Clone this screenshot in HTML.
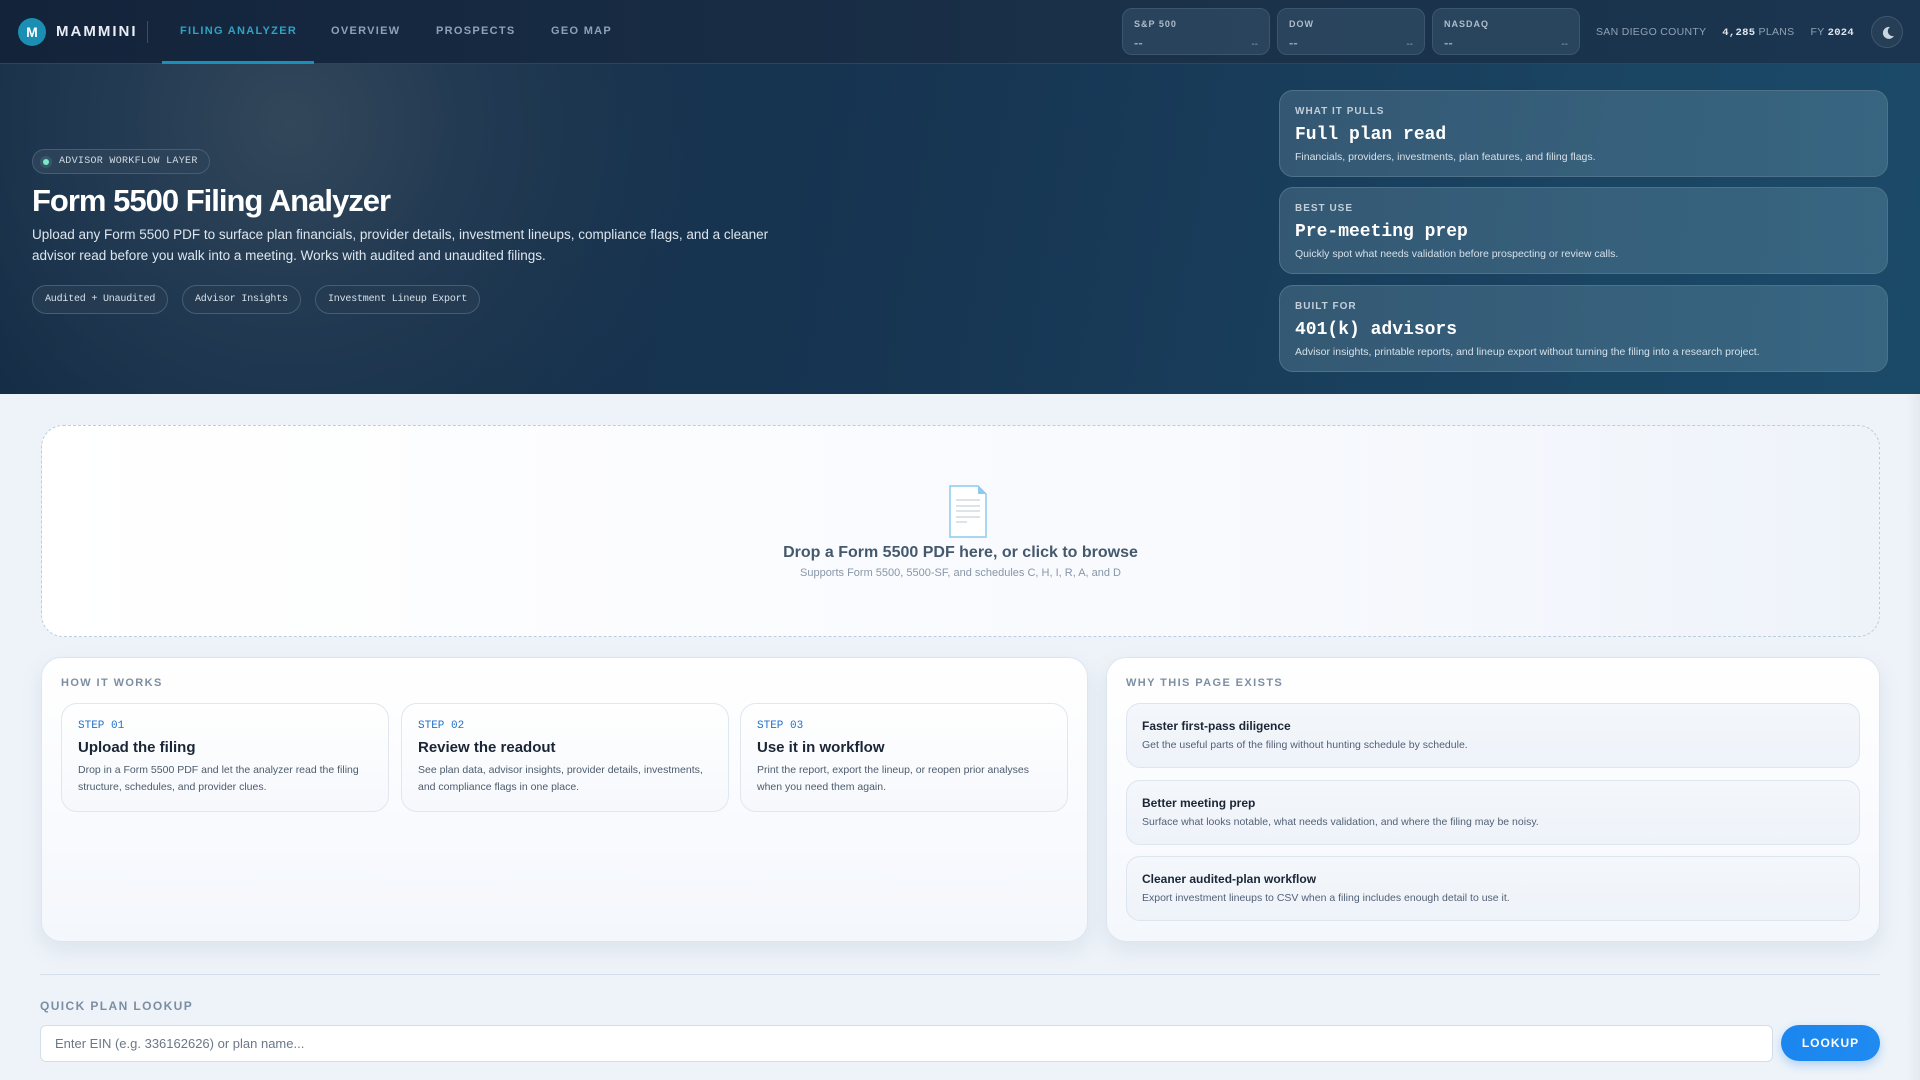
<!DOCTYPE html>
<html><head><meta charset="utf-8"><style>
*{box-sizing:border-box;margin:0;padding:0}
body{width:1920px;height:1080px;overflow:hidden;font-family:"Liberation Sans",sans-serif;background:#eef3f9;position:relative}
.mono{font-family:"Liberation Mono",monospace}
.hdr{position:absolute;left:0;top:0;width:1920px;height:64px;background:linear-gradient(90deg,#13233a,#1a3149 60%,#1b3550);border-bottom:1px solid #2a4560}
.logo{position:absolute;left:18px;top:18px;width:28px;height:28px;border-radius:50%;background:#1b8fb3;color:#fff;font-weight:bold;font-size:14px;text-align:center;line-height:28px}
.brand{position:absolute;left:56px;top:23px;color:#e8eef5;font-weight:bold;font-size:15px;letter-spacing:2px}
.sep{position:absolute;left:147px;top:21px;width:1px;height:22px;background:#3a5068}
.nav{position:absolute;top:25px;font-size:11px;font-weight:bold;letter-spacing:1.3px;color:#8fa2b5}
.tick{position:absolute;top:8px;width:148px;height:47px;border:1px solid #3c566f;border-radius:10px;background:rgba(60,90,115,.45)}
.tick b{position:absolute;left:11px;top:10px;font-size:9px;color:#aebdcc;letter-spacing:1px}
.tick i{position:absolute;left:11px;top:26px;font-style:normal;color:#8da0b3;font-size:13px;font-weight:bold}
.tick u{position:absolute;right:11px;top:30px;text-decoration:none;color:#8da0b3;font-size:10px}
.hero{position:absolute;left:0;top:64px;width:1920px;height:330px;background:radial-gradient(circle at 290px 60px,#33475a 0,#223a52 180px,transparent 420px),linear-gradient(100deg,#142a44 0%,#173653 50%,#1a4664 85%,#1b4a68 100%)}
.badge{position:absolute;left:32px;height:25px;padding:0 11px 0 26px;border:1px solid #455e74;border-radius:13px;background:#2c4258;color:#d0dae4;font-size:10px;line-height:23px;letter-spacing:.3px}
.badge:before{content:"";position:absolute;left:7px;top:6px;width:12px;height:12px;border-radius:50%;background:#36596a}
.badge:after{content:"";position:absolute;left:10px;top:9px;width:6px;height:6px;border-radius:50%;background:#7ee8c9}
h1{position:absolute;left:32px;color:#fff;font-size:31px;letter-spacing:-1px}
.sub{position:absolute;left:32px;width:750px;color:#dde6ee;font-size:13.5px;line-height:21px}
.pill{position:absolute;height:29px;border:1px solid #465e74;border-radius:15px;background:#253b52;color:#d8e1ea;font-size:10px;line-height:27px;padding:0 12px;letter-spacing:-.2px}
.hc{position:absolute;left:1279px;width:609px;height:87px;border:1px solid #4f7189;border-radius:14px;background:linear-gradient(90deg,rgba(80,115,140,.5),rgba(90,135,160,.45))}
.hc .k{position:absolute;left:15px;top:15px;font-size:10px;font-weight:bold;color:#c2cfda;letter-spacing:1px}
.hc .t{position:absolute;left:15px;top:34px;font-size:18px;font-weight:bold;color:#fff}
.hc .d{position:absolute;left:15px;top:60px;font-size:10.5px;color:#d6e0e8}
.drop{position:absolute;left:41px;top:425px;width:1839px;height:212px;border:1px dashed #bccde0;border-radius:22px;background:linear-gradient(90deg,#fff,#f7f9fd 70%,#eef3fa)}
.card{position:absolute;top:657px;height:285px;border:1px solid #dde5ef;border-radius:20px;background:linear-gradient(#fff,#f4f7fc);box-shadow:0 8px 20px rgba(120,140,170,.15)}
.lbl{position:absolute;font-size:11px;font-weight:bold;letter-spacing:1.4px;color:#7d8ea2}
.step{position:absolute;top:703px;width:328px;height:109px;border:1px solid #e0e7f0;border-radius:16px;background:linear-gradient(#fff,#f6f8fc)}
.step .s{position:absolute;left:16px;top:16px;font-size:11px;color:#2272c9}
.step .t{position:absolute;left:16px;top:35px;font-size:15px;font-weight:bold;color:#1a2535}
.step .d{position:absolute;left:16px;top:58px;width:290px;font-size:10.5px;line-height:17px;color:#4d5c6e}
.why{position:absolute;left:1126px;width:734px;height:65px;border:1px solid #dde5ef;border-radius:14px;background:linear-gradient(#f4f7fb,#eef3fa)}
.why .t{position:absolute;left:15px;top:15px;font-size:12px;font-weight:bold;color:#1b2636}
.why .d{position:absolute;left:15px;top:35px;font-size:10.5px;color:#526176}
</style></head><body>
<div class="hdr">
<div class="logo">M</div><div class="brand">MAMMINI</div><div class="sep"></div>
<div class="nav" style="left:180px;color:#2fa3c4">FILING ANALYZER</div>
<div style="position:absolute;left:162px;top:61px;width:152px;height:3px;background:#1a8fb8"></div>
<div class="nav" style="left:331px">OVERVIEW</div>
<div class="nav" style="left:436px">PROSPECTS</div>
<div class="nav" style="left:551px">GEO MAP</div>
<div class="tick" style="left:1122px"><b>S&amp;P 500</b><i>--</i><u>--</u></div>
<div class="tick" style="left:1277px"><b>DOW</b><i>--</i><u>--</u></div>
<div class="tick" style="left:1432px"><b>NASDAQ</b><i>--</i><u>--</u></div>
<div style="position:absolute;left:1596px;top:26px;font-size:10.5px;color:#8fa2b5;letter-spacing:.3px">SAN DIEGO COUNTY &nbsp;&nbsp;&nbsp; <b style="color:#dfe7ef" class="mono">4,285</b> PLANS &nbsp;&nbsp;&nbsp; FY <b class="mono" style="color:#dfe7ef">2024</b></div>
<div style="position:absolute;left:1871px;top:16px;width:32px;height:32px;border-radius:50%;border:1px solid #3e5770;background:#263e56"><svg width="32" height="32" viewBox="0 0 32 32"><path d="M18 10a6 6 0 1 0 4 9a5 5 0 0 1-4-9z" fill="#c9d5e0"/></svg></div>
</div>
<div class="hero">
<div class="badge mono" style="top:85px">ADVISOR WORKFLOW LAYER</div>
<h1 style="top:119px">Form 5500 Filing Analyzer</h1>
<div class="sub" style="top:160px">Upload any Form 5500 PDF to surface plan financials, provider details, investment lineups, compliance flags, and a cleaner advisor read before you walk into a meeting. Works with audited and unaudited filings.</div>
<div class="pill mono" style="left:32px;top:221px">Audited + Unaudited</div>
<div class="pill mono" style="left:182px;top:221px">Advisor Insights</div>
<div class="pill mono" style="left:315px;top:221px">Investment Lineup Export</div>
<div class="hc" style="top:26px"><div class="k">WHAT IT PULLS</div><div class="t mono">Full plan read</div><div class="d">Financials, providers, investments, plan features, and filing flags.</div></div>
<div class="hc" style="top:123px"><div class="k">BEST USE</div><div class="t mono">Pre-meeting prep</div><div class="d">Quickly spot what needs validation before prospecting or review calls.</div></div>
<div class="hc" style="top:221px"><div class="k">BUILT FOR</div><div class="t mono">401(k) advisors</div><div class="d">Advisor insights, printable reports, and lineup export without turning the filing into a research project.</div></div>
</div>
<div class="drop">
<svg style="position:absolute;left:900px;top:58px" width="80" height="54" viewBox="0 0 80 54"><path d="M38 2h28l8 8v43H38z" fill="#fff" stroke="#8ccaf0" stroke-width="1.5" transform="translate(-30,0)"/><path d="M36 2l8 8h-8z" fill="#8ccaf0"/><g stroke="#c9d2dc" stroke-width="1.3"><path d="M14 16h24M14 22h24M14 27h24M14 33h24M14 38h11"/></g></svg>
<div style="position:absolute;left:0;width:100%;top:118px;text-align:center;font-size:16px;font-weight:bold;color:#45596e">Drop a Form 5500 PDF here, or click to browse</div>
<div style="position:absolute;left:0;width:100%;top:141px;text-align:center;font-size:11px;color:#8796a8">Supports Form 5500, 5500-SF, and schedules C, H, I, R, A, and D</div>
</div>
<div class="card" style="left:41px;width:1047px"></div>
<div class="lbl" style="left:61px;top:677px">HOW IT WORKS</div>
<div class="step" style="left:61px"><div class="s mono">STEP 01</div><div class="t">Upload the filing</div><div class="d">Drop in a Form 5500 PDF and let the analyzer read the filing structure, schedules, and provider clues.</div></div>
<div class="step" style="left:401px"><div class="s mono">STEP 02</div><div class="t">Review the readout</div><div class="d">See plan data, advisor insights, provider details, investments, and compliance flags in one place.</div></div>
<div class="step" style="left:740px"><div class="s mono">STEP 03</div><div class="t">Use it in workflow</div><div class="d">Print the report, export the lineup, or reopen prior analyses when you need them again.</div></div>
<div class="card" style="left:1106px;width:774px"></div>
<div class="lbl" style="left:1126px;top:677px">WHY THIS PAGE EXISTS</div>
<div class="why" style="top:703px"><div class="t">Faster first-pass diligence</div><div class="d">Get the useful parts of the filing without hunting schedule by schedule.</div></div>
<div class="why" style="top:780px"><div class="t">Better meeting prep</div><div class="d">Surface what looks notable, what needs validation, and where the filing may be noisy.</div></div>
<div class="why" style="top:856px"><div class="t">Cleaner audited-plan workflow</div><div class="d">Export investment lineups to CSV when a filing includes enough detail to use it.</div></div>
<div style="position:absolute;left:40px;top:974px;width:1840px;height:1px;background:#d6e0ec"></div>
<div class="lbl" style="left:40px;top:999px;font-size:12px">QUICK PLAN LOOKUP</div>
<div style="position:absolute;left:40px;top:1025px;width:1733px;height:37px;border:1px solid #d4deea;border-radius:6px;background:#fff;font-size:13px;color:#6b7888;line-height:35px;padding-left:14px">Enter EIN (e.g. 336162626) or plan name...</div>
<div style="position:absolute;left:1781px;top:1025px;width:99px;height:36px;border-radius:18px;background:linear-gradient(90deg,#1b86ef,#1f8af0);color:#fff;font-size:12px;font-weight:bold;letter-spacing:1px;text-align:center;line-height:36px;box-shadow:0 4px 10px rgba(30,130,240,.3)">LOOKUP</div>
<div style="position:absolute;left:1906px;top:394px;width:14px;height:686px;background:linear-gradient(90deg,#eef3f9,#e4e9f0)"></div>
</body></html>
